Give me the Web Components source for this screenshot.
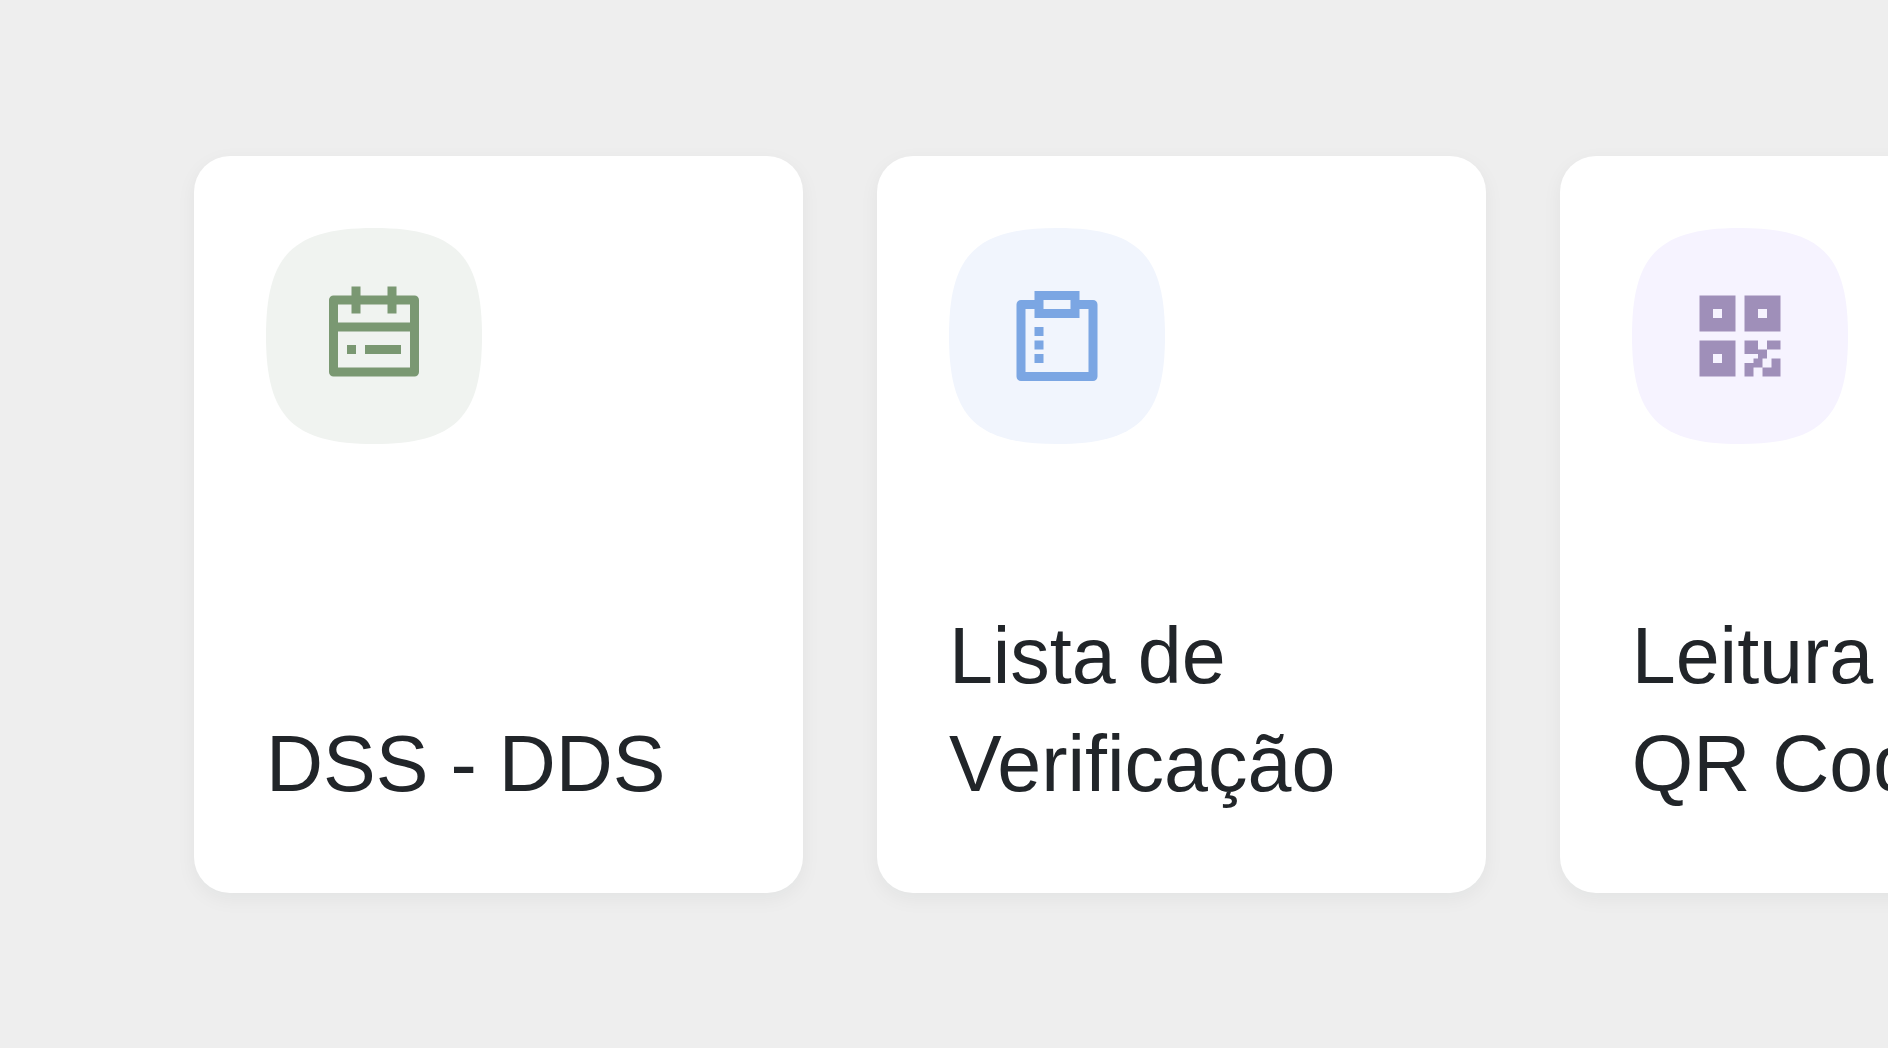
<!DOCTYPE html>
<html lang="pt-BR">
<head>
<meta charset="utf-8">
<meta name="viewport" content="width=device-width, initial-scale=1">
<title>Atalhos</title>
<style>
  body {
    margin: 0;
    min-height: 100vh;
    background: #eee;
    color: #212529;
    font-family: "Liberation Sans", Arial, sans-serif;
  }
</style>
</head>
<body>
<shortcut-row>
  <shortcut-card icon="calendar">DSS - DDS</shortcut-card>
  <shortcut-card icon="clipboard">Lista de Verificação</shortcut-card>
  <shortcut-card icon="qr">Leitura de QR Code</shortcut-card>
</shortcut-row>

<script>
  // Glyphs on a 24-unit grid, with the colours of their badge.
  const ICONS = {
    calendar: {
      ink: '#7a9872', tint: '#f0f3f0',
      d: 'M7 1h2v2h6V1h2v2h4a1 1 0 0 1 1 1v16a1 1 0 0 1-1 1H3a1 1 0 0 1-1-1V4a1 1 0 0 1 1-1h4ZM4 5v4h16V5h-3v2h-2V5H9v2H7V5ZM4 11v8h16v-8ZM6 14h2v2H6ZM10 14h8v2h-8Z'
    },
    clipboard: {
      ink: '#7ba6e3', tint: '#f1f5fd',
      d: 'M7 4V2h10v2h3a1 1 0 0 1 1 1v16a1 1 0 0 1-1 1H4a1 1 0 0 1-1-1V5a1 1 0 0 1 1-1ZM7 6H5v14h14V6h-2v2H7ZM9 4v2h6V4ZM7 10h2v2H7ZM7 13h2v2H7ZM7 16h2v2H7Z'
    },
    qr: {
      ink: '#9f8fb9', tint: '#f6f3ff',
      d: 'M3 3h8v8H3ZM6 6v2h2V6ZM13 3h8v8h-8ZM16 6v2h2V6ZM3 13h8v8H3ZM6 16v2h2v-2ZM13 13h3v2h2v2h-1v2h-2v2h-2v-3h2v-1h1v-1h-3ZM18 13h3v2h-3ZM19 17h2v4h-4v-2h2Z'
    }
  };

  class IconBadge extends HTMLElement {
    connectedCallback() {
      if (this.shadowRoot) return;
      const icon = ICONS[this.getAttribute('name')];
      this.attachShadow({ mode: 'open' }).innerHTML = `
        <style>
          :host { display: block; width: 216px; height: 216px; }
          svg { display: block; width: 100%; height: 100%; }
        </style>
        <svg viewBox="0 0 48 48" aria-hidden="true">
          <path fill="${icon.tint}" d="M0 24C0 6 6 0 24 0s24 6 24 24-6 24-24 24S0 42 0 24Z"/>
          <path fill="${icon.ink}" fill-rule="evenodd" transform="translate(12 12)" d="${icon.d}"/>
        </svg>`;
    }
  }

  class ShortcutCard extends HTMLElement {
    connectedCallback() {
      if (this.shadowRoot) return;
      this.attachShadow({ mode: 'open' }).innerHTML = `
        <style>
          :host { display: flex; flex: 0 0 32.25%; }
          a {
            box-sizing: border-box;
            display: flex;
            flex: 1;
            flex-direction: column;
            justify-content: space-between;
            gap: 158px;
            padding: 72px 72px 75px;
            border-radius: 36px;
            background: #fff;
            box-shadow: 0 6px 20px rgba(20, 40, 40, .05);
            color: inherit;
            text-decoration: none;
          }
          span { font-size: 79px; line-height: 108px; }
        </style>
        <a href="#${this.getAttribute('icon')}">
          <icon-badge name="${this.getAttribute('icon')}"></icon-badge>
          <span><slot></slot></span>
        </a>`;
    }
  }

  class ShortcutRow extends HTMLElement {
    connectedCallback() {
      if (this.shadowRoot) return;
      this.attachShadow({ mode: 'open' }).innerHTML = `
        <style>
          :host { display: block; overflow-x: auto; scrollbar-width: none; }
          nav { padding: 156px 0 156px 194px; }
          div { display: flex; gap: 74px; width: 100vw; }
        </style>
        <nav aria-label="Atalhos"><div><slot></slot></div></nav>`;
    }
  }

  customElements.define('icon-badge', IconBadge);
  customElements.define('shortcut-card', ShortcutCard);
  customElements.define('shortcut-row', ShortcutRow);
</script>
</body>
</html>
